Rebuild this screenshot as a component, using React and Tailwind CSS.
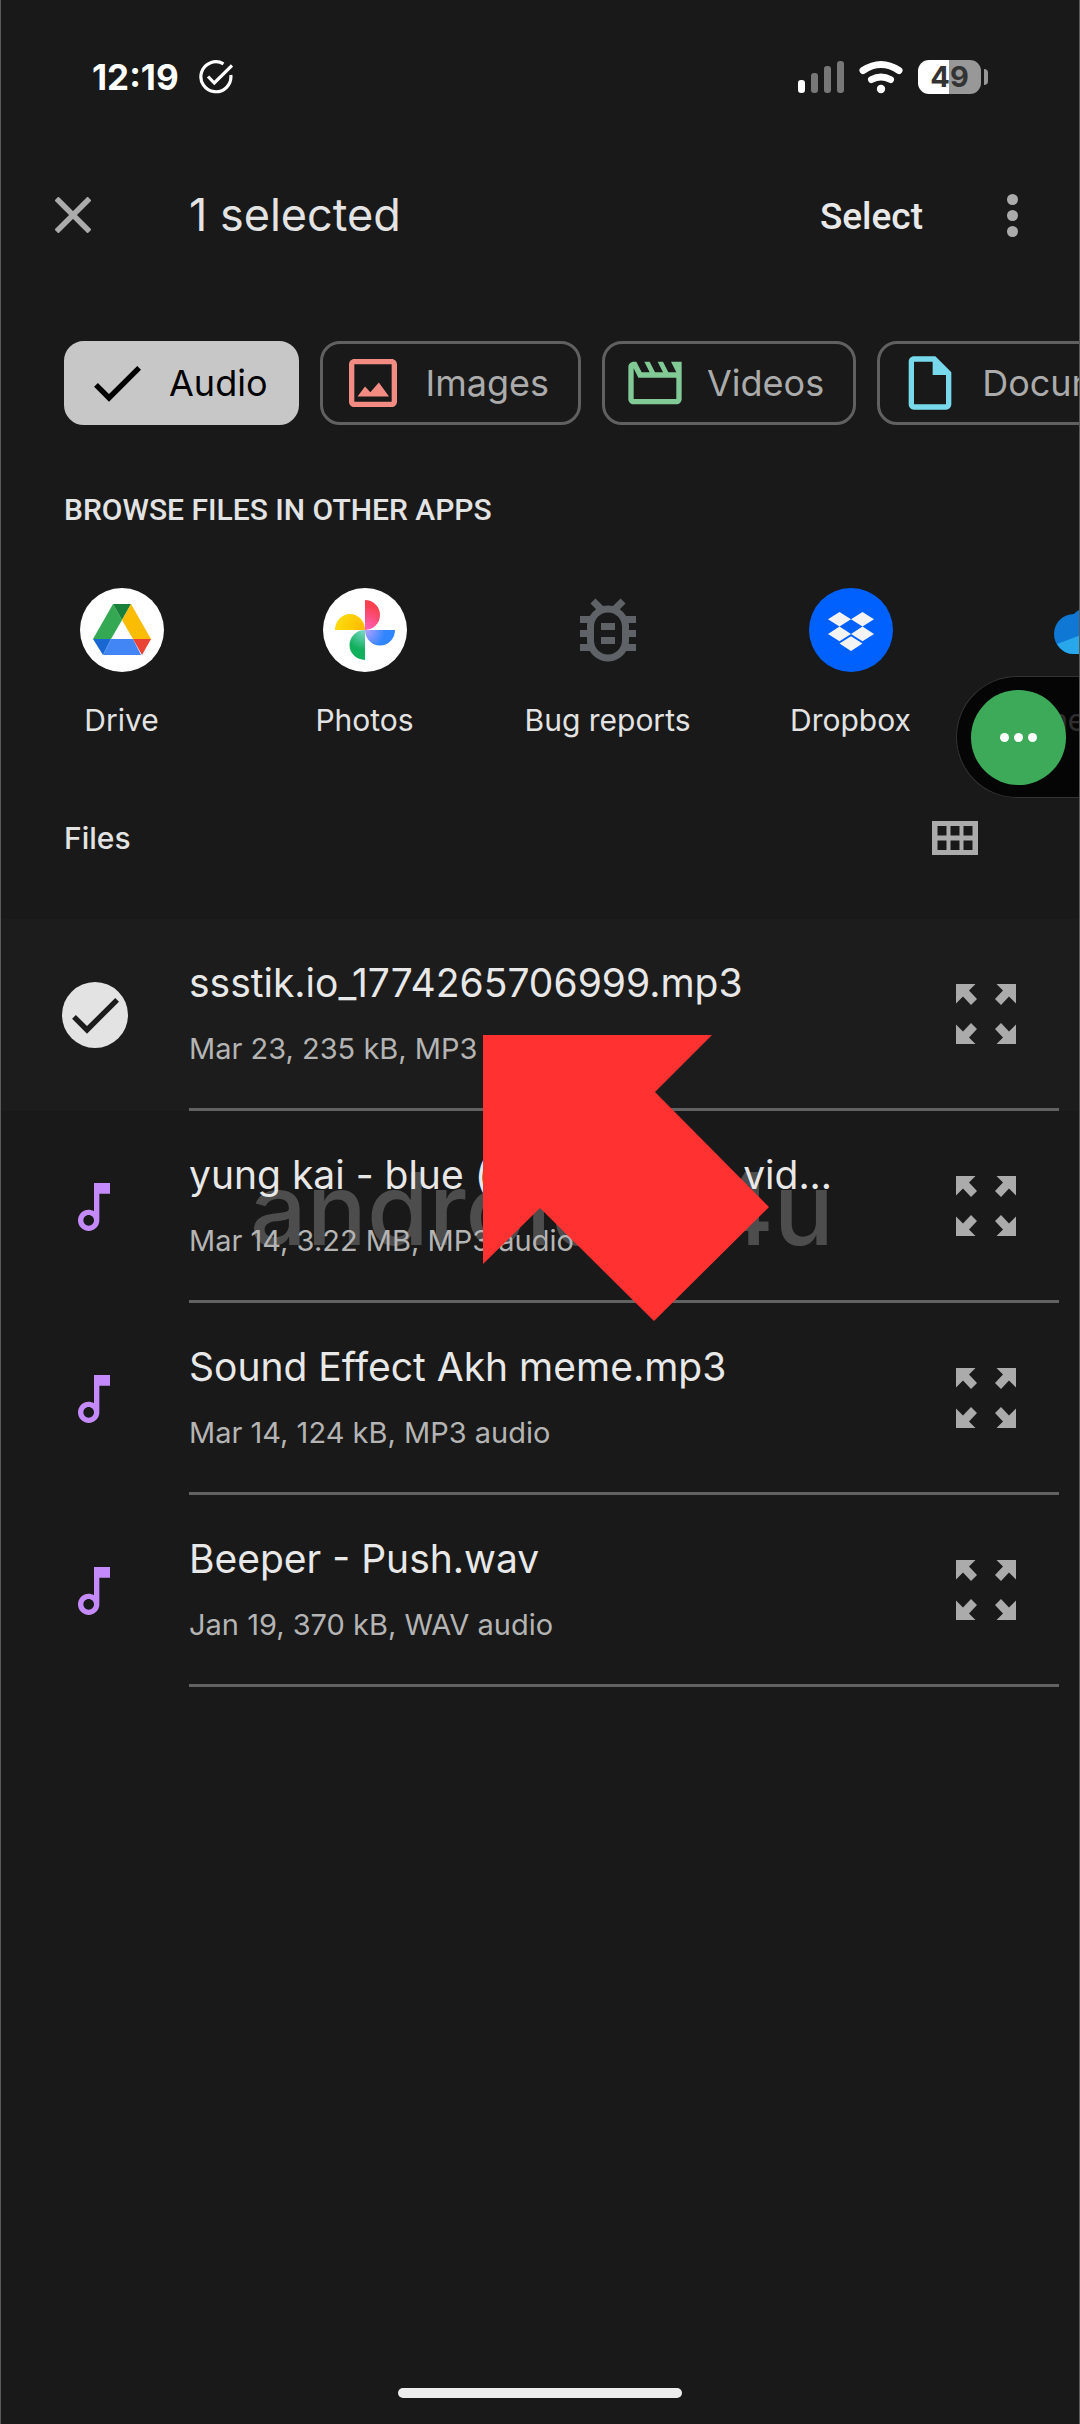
function Icon({ d, className = "size-16", color = "currentColor" }) {
  return (
    <svg viewBox="0 0 24 24" className={"shrink-0 " + className} fill={color} aria-hidden="true">
      <path d={d} />
    </svg>
  );
}

const CHECK = "M9 16.17 4.83 12l-1.42 1.41L9 19 21 7l-1.41-1.41z";
const IMAGE =
  "M19 5v14H5V5h14m0-2H5c-1.1 0-2 .9-2 2v14c0 1.1.9 2 2 2h14c1.1 0 2-.9 2-2V5c0-1.1-.9-2-2-2zM6.2 17.1 9 13.3l2 2.2 3.2-3.7 3.8 5.3z";
const MOVIE =
  "M4 6.47L5.76 10H20v8H4V6.47M22 4h-4l2 4h-3l-2-4h-2l2 4h-3l-2-4H8l2 4H7L5 4H4c-1.1 0-1.99.9-1.99 2L2 18c0 1.1.9 2 2 2h16c1.1 0 2-.9 2-2V4z";
const DOC =
  "M14 2H6c-1.1 0-1.99.9-1.99 2L4 20c0 1.1.89 2 1.99 2H18c1.1 0 2-.9 2-2V8l-6-6zM6 20V4h7v5h5v11H6z";
const BUG =
  "M20 8h-2.81a5.985 5.985 0 0 0-1.82-1.96L17 4.41 15.59 3l-2.17 2.17a6.002 6.002 0 0 0-2.83 0L8.41 3 7 4.41l1.62 1.63C7.88 6.55 7.26 7.22 6.81 8H4v2h2.09c-.05.33-.09.66-.09 1v1H4v2h2v1c0 .34.04.67.09 1H4v2h2.81c1.04 1.79 2.97 3 5.19 3s4.15-1.21 5.19-3H20v-2h-2.09c.05-.33.09-.66.09-1v-1h2v-2h-2v-1c0-.34-.04-.67-.09-1H20V8zm-4 4v3c0 2.21-1.79 4-4 4s-4-1.79-4-4v-4c0-2.21 1.79-4 4-4s4 1.79 4 4v1zm-6 2h4v2h-4zm0-4h4v2h-4z";
const NOTE =
  "M12 3l.01 10.55c-.59-.34-1.27-.55-2-.55C7.79 13 6 14.79 6 17s1.79 4 4.01 4S14 19.21 14 17V7h4V3h-6zm-1.99 16c-1.1 0-2-.9-2-2s.9-2 2-2 2 .9 2 2-.9 2-2 2z";

function StatusBar() {
  return (
    <div className="flex h-[60px] items-center pr-[91px] pl-[91px] text-white">
      <span className="text-[35px] leading-[48px] font-bold">12:19</span>
      <svg viewBox="0 0 34 34" className="ml-5 size-[34px]" fill="none" stroke="#fff" strokeWidth="3.2" aria-hidden="true">
        <path d="M24.5 3.8A15 15 0 1 0 31.8 15" />
        <path d="M9 16.5l6.3 6.5L33 5.5" />
      </svg>
      <div className="ml-auto flex items-center gap-[15px]">
        <svg viewBox="0 0 46 34" className="h-[34px] w-[46px]" aria-hidden="true">
          <rect x="0" y="20" width="7" height="13" rx="3" fill="#fff" />
          <rect x="13" y="13" width="7" height="20" rx="3" fill="#777" />
          <rect x="26" y="6" width="7" height="27" rx="3" fill="#777" />
          <rect x="39" y="1" width="7" height="32" rx="3" fill="#777" />
        </svg>
        <svg viewBox="0 0 44 34" className="h-[34px] w-[44px]" fill="none" stroke="#fff" strokeWidth="7" strokeLinecap="round" aria-hidden="true">
          <path d="M4 10.5q18-12 36 0" />
          <path d="M12.5 19.5q9.500-5 19 0" />
          <circle cx="22" cy="29" r="4.200" fill="#fff" stroke="none" />
        </svg>
        <div className="flex items-center gap-[3px]">
          <div className="flex h-[34px] w-[63px] items-center justify-center rounded-[11px] bg-linear-to-r from-white from-50% to-[#989898] to-50% text-[29px] leading-[34px] font-bold text-[#333]">
            49
          </div>
          <div className="h-4 w-1 rounded-r-sm bg-[#989898]" />
        </div>
      </div>
    </div>
  );
}

function Toolbar() {
  return (
    <header className="mt-[60px] flex h-[96px] items-center pr-[55px] pl-[54px]">
      <button aria-label="Close">
        <svg viewBox="0 0 36 36" className="size-9" stroke="#ababab" strokeWidth="5.500" aria-hidden="true">
          <path d="M1.500 1.500l33 33M34.500 1.500l-33 33" />
        </svg>
      </button>
      <h1 className="ml-[98px] text-[45px] leading-[56px] text-[#e3e3e3]">1 selected</h1>
      <button className="mr-[78px] ml-auto pt-[3px] font-[Roboto,sans-serif] text-[37px] leading-[48px] font-medium text-[#e8e8e8]">
        Select
      </button>
      <button aria-label="More options" className="flex w-[23px] flex-col items-center gap-[5px]">
        <span className="size-[11px] rounded-full bg-[#ababab]" />
        <span className="size-[11px] rounded-full bg-[#ababab]" />
        <span className="size-[11px] rounded-full bg-[#ababab]" />
      </button>
    </header>
  );
}

const chips = [
  { label: "Audio", d: CHECK, color: "#000", on: true },
  { label: "Images", d: IMAGE, color: "#f28b82" },
  { label: "Videos", d: MOVIE, color: "#81c995" },
  { label: "Documents", d: DOC, color: "#78d9ec" },
];

function Chips() {
  return (
    <div className="mt-[78px] flex gap-[21px] overflow-hidden pl-[63px]">
      {chips.map((c) => (
        <button
          key={c.label}
          aria-pressed={!!c.on}
          className={
            "flex h-[84px] shrink-0 items-center gap-5 rounded-[20px] border-[3px] pr-[29px] pl-[18px] text-[36px] leading-[48px] " +
            (c.on ? "border-[#c7c7c7] bg-[#c7c7c7] text-black" : "border-[#606060] text-[#ababab]")
          }
        >
          <Icon d={c.d} color={c.color} />
          {c.label}
        </button>
      ))}
    </div>
  );
}

function DriveLogo() {
  return (
    <svg viewBox="0 0 84 84" className="size-[84px]" aria-hidden="true">
      <circle cx="42" cy="42" r="42" fill="#fff" />
      <path d="M33 16 13 51h18l11-19z" fill="#34a853" />
      <path d="M33 16h18l-9 16z" fill="#188038" />
      <path d="M51 16 71 51H53L42 32z" fill="#fbbc04" />
      <path d="M13 51h18l-8 16z" fill="#1967d2" />
      <path d="M31 51h22l8 16H23z" fill="#4285f4" />
      <path d="M53 51h18l-9 16z" fill="#ea4335" />
    </svg>
  );
}

function PhotosLogo() {
  return (
    <svg viewBox="0 0 84 84" className="size-[84px]" aria-hidden="true">
      <defs>
        <radialGradient id="pr" gradientUnits="userSpaceOnUse" cx="42" cy="42" r="24">
          <stop offset="0" stopColor="#ff63c8" />
          <stop offset="1" stopColor="#f94150" />
        </radialGradient>
        <radialGradient id="pb" gradientUnits="userSpaceOnUse" cx="42" cy="42" r="20">
          <stop offset="0" stopColor="#b9a2ff" />
          <stop offset="1" stopColor="#3186ff" />
        </radialGradient>
        <radialGradient id="pg" gradientUnits="userSpaceOnUse" cx="42" cy="42" r="20">
          <stop offset="0" stopColor="#7fdcd0" />
          <stop offset="1" stopColor="#12b05c" />
        </radialGradient>
        <radialGradient id="py" gradientUnits="userSpaceOnUse" cx="42" cy="42" r="26">
          <stop offset="0" stopColor="#ffb800" />
          <stop offset="1" stopColor="#fbd80c" />
        </radialGradient>
      </defs>
      <circle cx="42" cy="42" r="42" fill="#fff" />
      <path d="M42 42V12a15 15 0 0 1 0 30z" fill="url(#pr)" />
      <path d="M42 42h30a15 15.500 0 0 1-30 0z" fill="url(#pb)" />
      <path d="M42 42v30a15.500 15 0 0 1 0-30z" fill="url(#pg)" />
      <path d="M42 42H12a15 16 0 0 1 30 0z" fill="url(#py)" />
    </svg>
  );
}

function DropboxLogo() {
  return (
    <svg viewBox="0 0 84 84" className="size-[84px]" aria-hidden="true">
      <circle cx="42" cy="42" r="42" fill="#0061fe" />
      <path
        fill="#f4f4f4"
        d="M30.500 24 42 31.300 30.500 38.600 19 31.300zM53.500 24 65 31.300 53.500 38.600 42 31.300zM30.500 38.600 42 45.900 30.500 53.200 19 45.900zM53.500 38.600 65 45.900 53.500 53.200 42 45.900zM42 48.300 53.500 55.600 42 62.900 30.500 55.600z"
      />
    </svg>
  );
}

function OneDriveLogo() {
  return (
    <svg viewBox="0 0 84 84" className="size-[84px]" aria-hidden="true">
      <path d="M22 66a20 20 0 0 1 0-40 26 24 0 0 1 44 8 17 17 0 0 1-1 32z" fill="#0f78d4" />
      <path d="M5 56 40 43l34 18q-4 5-11 5H22q-11 0-17-10z" fill="#28a8ea" />
    </svg>
  );
}

const apps = [
  { name: "Drive", logo: <DriveLogo /> },
  { name: "Photos", logo: <PhotosLogo /> },
  { name: "Bug reports", logo: <Icon d={BUG} className="size-[84px]" color="#5f6368" /> },
  { name: "Dropbox", logo: <DropboxLogo /> },
  { name: "OneDrive", logo: <OneDriveLogo /> },
];

function Apps() {
  return (
    <section className="relative pt-[67px]">
      <h2 className="ml-[63px] font-[Roboto,sans-serif] text-[30px] leading-9 font-medium text-[#e3e3e3]">
        BROWSE FILES IN OTHER APPS
      </h2>
      <div className="mt-[60px] -ml-px flex overflow-hidden">
        {apps.map((a) => (
          <button key={a.name} className="flex w-[243px] shrink-0 flex-col items-center text-[30px] leading-10 text-[#e3e3e3]">
            {a.logo}
            <span className="mt-7">{a.name}</span>
          </button>
        ))}
      </div>
      <div className="absolute top-[251px] right-0 flex h-[122px] w-[123px] items-center rounded-l-full border border-r-0 border-[#333] bg-black/80 pl-[14px]">
        <button aria-label="Open panel" className="flex size-[95px] items-center justify-center gap-[5px] rounded-full bg-[#3caa58]">
          <span className="size-[9px] rounded-full bg-white" />
          <span className="size-[9px] rounded-full bg-white" />
          <span className="size-[9px] rounded-full bg-white" />
        </button>
      </div>
    </section>
  );
}

function ExpandIcon() {
  const d = "M0 0h19.500l-6.500 6.500 8 8.500-6 6-8-8.500L0 19.500z";
  return (
    <svg viewBox="0 0 60 60" className="size-[60px]" fill="#ababab" aria-hidden="true">
      <path d={d} />
      <path d={d} transform="matrix(-1 0 0 1 60 0)" />
      <path d={d} transform="matrix(1 0 0 -1 0 60)" />
      <path d={d} transform="matrix(-1 0 0 -1 60 60)" />
    </svg>
  );
}

const files = [
  { name: "ssstik.io_1774265706999.mp3", meta: "Mar 23, 235 kB, MP3 audio", on: true },
  { name: "yung kai - blue (official music vid...", meta: "Mar 14, 3.22 MB, MP3 audio" },
  { name: "Sound Effect Akh meme.mp3", meta: "Mar 14, 124 kB, MP3 audio" },
  { name: "Beeper - Push.wav", meta: "Jan 19, 370 kB, WAV audio" },
];

function FileRow({ file }) {
  return (
    <li className={"flex pr-5 " + (file.on ? "bg-[#1c1c1c]" : "")}>
      <div className="flex w-[188px] shrink-0 items-center pl-[61px]">
        {file.on ? (
          <span className="flex size-[66px] items-center justify-center rounded-full bg-[#e3e3e3]">
            <Icon d={CHECK} color="#1c1c1c" />
          </span>
        ) : (
          <Icon d={NOTE} color="#c58af9" />
        )}
      </div>
      <div className="flex min-w-0 flex-1 items-center border-b-[3px] border-[#626262] pt-10 pr-[43px] pb-[39px]">
        <div className="min-w-0 flex-1 whitespace-nowrap">
          <div className="text-[39px] leading-[48px] text-[#e8e8e8]">{file.name}</div>
          <div className="mt-[22px] text-[29px] leading-10 text-[#b4b4b4]">{file.meta}</div>
        </div>
        <button aria-label={"Preview " + file.name}>
          <ExpandIcon />
        </button>
      </div>
    </li>
  );
}

export default function App() {
  return (
    <main className="flex min-h-screen flex-col overflow-hidden border-x border-[#5a5a5a] bg-[#191919] pt-[47px] font-[Inter,sans-serif]">
      <StatusBar />
      <Toolbar />
      <Chips />
      <Apps />
      <div className="mt-[68px] flex h-[60px] items-center justify-between pr-[101px] pl-[63px]">
        <h2 className="text-[30px] leading-10 font-medium text-[#e3e3e3]">Files</h2>
        <button aria-label="Grid view">
          <svg viewBox="0 0 46 34" className="h-[34px] w-[46px]" aria-hidden="true">
            <path
              fill="#ababab"
              fillRule="evenodd"
              d="M0 0h46v34H0zM5.500 5v9.500h9V5zM18.500 5v9.500h9V5zM31.500 5v9.500h9V5zM5.500 19.500V29h9v-9.500zM18.500 19.500V29h9v-9.500zM31.500 19.500V29h9v-9.500z"
            />
          </svg>
        </button>
      </div>
      <section className="relative mt-[51px]">
        <div
          aria-hidden="true"
          className="absolute top-[230px] left-[249px] flex w-[584px] justify-between text-[100px] leading-[120px] font-medium text-[#4d4d4d]"
        >
          <span>android</span>
          <span>4u</span>
        </div>
        <ul className="relative">
          {files.map((f) => (
            <FileRow key={f.name} file={f} />
          ))}
        </ul>
        <svg viewBox="0 0 286 286" className="absolute top-[116px] left-[482px] size-[286px]" fill="#ff3131" aria-hidden="true">
          <path d="M0 0h229l-57 57 114 115-115 114L57 173 0 229z" />
        </svg>
      </section>
      <div className="mx-auto mt-auto mb-[26px] h-[10px] w-[284px] rounded-full bg-[#ededed]" />
    </main>
  );
}
